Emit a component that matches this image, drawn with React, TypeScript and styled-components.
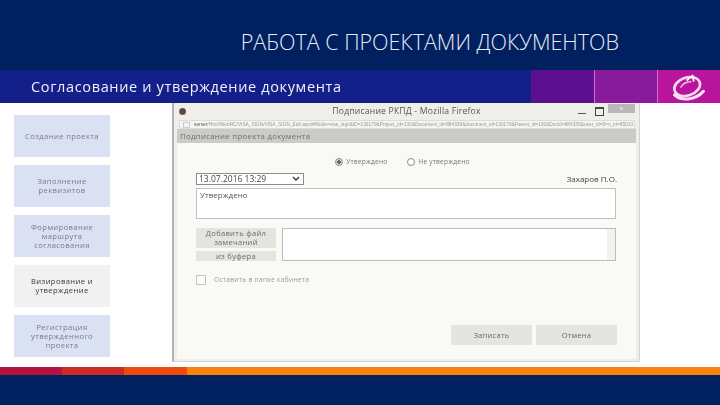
import React from "react";
import styled, { createGlobalStyle } from "styled-components";

const Global = createGlobalStyle`
  html, body { margin: 0; padding: 0; background: #002060; }
  #root { width: 720px; height: 405px; overflow: hidden; }
`;

const Slide = styled.div`
  width: 720px;
  height: 405px;
  display: flex;
  flex-direction: column;
  background: #fff;
  font-family: "Open Sans", "Noto Sans", sans-serif;
`;

const TitleBar = styled.header`
  height: 70px;
  flex: none;
  background: #002060;
  display: flex;
  align-items: flex-start;
  justify-content: flex-end;
  padding: 30px 101px 0 0;
  box-sizing: border-box;
`;

const Title = styled.h1`
  margin: 0;
  font: 300 21.5px/24px "Open Sans", sans-serif;
  color: #e8ecf6;
  white-space: nowrap;
`;

const Band = styled.div`
  height: 33px;
  flex: none;
  display: flex;
  background: #14208a;
`;

const BandTitle = styled.div`
  flex: 1;
  padding-left: 31px;
  font: 400 14.5px/34px "Open Sans", sans-serif;
  letter-spacing: 0.65px;
  color: #f0f2fa;
  filter: blur(0.3px);
`;

const BandBlock = styled.div<{ $bg: string; $line?: boolean }>`
  width: 63px;
  background: ${(p) => p.$bg};
  box-shadow: ${(p) => (p.$line ? "inset 1px 0 0 #d070c8" : "none")};
  display: flex;
  align-items: center;
  justify-content: center;
`;

const Main = styled.main`
  height: 264px;
  flex: none;
  display: flex;
  background: #fff;
`;

const Sidebar = styled.nav`
  width: 172px;
  flex: none;
  box-sizing: border-box;
  padding: 12px 0 0 14px;
  display: flex;
  flex-direction: column;
  gap: 8px;
`;

const Step = styled.div<{ $active?: boolean }>`
  width: 96px;
  height: 42px;
  flex: none;
  box-sizing: border-box;
  padding: 0 4px;
  display: flex;
  align-items: center;
  justify-content: center;
  text-align: center;
  background: ${(p) => (p.$active ? "#f1f1f1" : "#d9e1f2")};
  color: ${(p) => (p.$active ? "#3a3a3a" : "#777c8a")};
  font: 400 7.6px/9px "Open Sans", sans-serif;
  letter-spacing: 0.4px;
  filter: blur(0.45px);
`;

const Win = styled.section`
  width: 468px;
  height: 259px;
  flex: none;
  box-sizing: border-box;
  border: 1px solid #d4d4d4;
  border-left: 2px solid #b4b4b4;
  border-top: none;
  padding: 0 3px 2px 3px;
  background: #efefea;
  display: flex;
  flex-direction: column;
`;

const WinTitle = styled.div`
  position: relative;
  height: 17px;
  flex: none;
  display: flex;
  align-items: center;
  justify-content: center;
  font: 400 8.6px/17px "Open Sans", sans-serif;
  letter-spacing: 0.2px;
  color: #555;
  filter: blur(0.3px);
`;

const FoxDot = styled.span`
  position: absolute;
  left: 2px;
  top: 5px;
  width: 7px;
  height: 7px;
  border-radius: 50%;
  background: radial-gradient(circle at 55% 45%, #4a4a5a 35%, #b5483a 80%);
`;

const WinControls = styled.div`
  position: absolute;
  right: 1px;
  top: 1px;
  display: flex;
  align-items: flex-start;
  gap: 9px;
`;

const MinIcon = styled.span`
  width: 8px;
  height: 1px;
  margin-top: 9px;
  background: #555;
`;

const MaxIcon = styled.span`
  width: 7px;
  height: 6px;
  margin-top: 3px;
  border: 1px solid #444;
  border-top-width: 2px;
`;

const CloseBtn = styled.span`
  width: 27px;
  height: 9px;
  margin-left: -5px;
  background: #b8b8b8;
  color: #eee;
  text-align: center;
  font: 700 6px/8px "Liberation Sans", sans-serif;
`;

const UrlBar = styled.div`
  height: 9px;
  flex: none;
  margin: 0 1px 0 2px;
  box-sizing: border-box;
  border: 1px solid #dcdcdc;
  background: #f4f4f2;
  display: flex;
  align-items: center;
  gap: 4px;
  padding-left: 3px;
  overflow: hidden;
  white-space: nowrap;
  font: 400 4.8px/7px "Liberation Sans", sans-serif;
  color: #9a9a9a;
  filter: blur(0.3px);
  b { color: #555; font-weight: 400; }
`;

const Globe = styled.span`
  width: 5px;
  height: 4px;
  flex: none;
  border: 1px solid #c8cbd8;
`;

const Body = styled.div`
  flex: 1;
  display: flex;
  flex-direction: column;
  background: #f9f9f5;
  min-height: 0;
`;

const FormHead = styled.div`
  height: 14px;
  flex: none;
  background: #cdcbc5;
  padding-left: 3px;
  font: 400 7.8px/14px "Open Sans", sans-serif;
  letter-spacing: 0.3px;
  color: #6f6f6a;
  filter: blur(0.4px);
`;

const Form = styled.div`
  flex: 1;
  box-sizing: border-box;
  padding: 12px 19px 14px 19px;
  display: flex;
  flex-direction: column;
`;

const RadioRow = styled.div`
  display: flex;
  justify-content: center;
  gap: 20px;
  height: 13px;
  align-items: center;
  padding-right: 8px;
`;

const RadioItem = styled.label`
  display: flex;
  align-items: center;
  gap: 3px;
  font: 400 6.6px/10px "Open Sans", sans-serif;
  letter-spacing: 0.2px;
  color: #777;
  filter: blur(0.35px);
`;

const Radio = styled.span<{ $on?: boolean }>`
  width: 8px;
  height: 8px;
  box-sizing: border-box;
  border-radius: 50%;
  border: 1px solid #8a8a8a;
  background: ${(p) => (p.$on ? "radial-gradient(circle, #666 40%, #ddd 50%)" : "#fff")};
`;

const SelectRow = styled.div`
  margin-top: 4px;
  height: 13px;
  display: flex;
  justify-content: space-between;
  align-items: center;
`;

const Select = styled.div`
  width: 108px;
  height: 12px;
  box-sizing: border-box;
  border: 1px solid #8c8c8c;
  background: #fff;
  display: flex;
  align-items: center;
  justify-content: space-between;
  padding: 0 3px 0 2px;
  font: 400 8.5px/10px "Open Sans", sans-serif;
  color: #444;
  filter: blur(0.25px);
`;

const Person = styled.div`
  font: 400 8px/10px "Open Sans", sans-serif;
  color: #444;
  filter: blur(0.25px);
`;

const Note = styled.div`
  margin-top: 3px;
  width: 420px;
  height: 31px;
  box-sizing: border-box;
  border: 1px solid #c0c0c0;
  background: #fff;
  padding: 1px 3px;
  font: 400 8px/10px "Open Sans", sans-serif;
  color: #555;
  filter: blur(0.3px);
`;

const AttachRow = styled.div`
  margin-top: 9px;
  display: flex;
  gap: 6px;
`;

const AttachCol = styled.div`
  width: 80px;
  display: flex;
  flex-direction: column;
  gap: 3px;
`;

const GrayBtn = styled.div<{ $h: number }>`
  height: ${(p) => p.$h}px;
  background: #e6e4df;
  display: flex;
  align-items: center;
  justify-content: center;
  text-align: center;
  font: 400 7.6px/9px "Open Sans", sans-serif;
  letter-spacing: 0.3px;
  color: #6c6c68;
  filter: blur(0.35px);
`;

const AttachBox = styled.div`
  width: 334px;
  height: 33px;
  box-sizing: border-box;
  border: 1px solid #bcbcbc;
  background: #fff;
  display: flex;
  justify-content: flex-end;
`;

const Scroll = styled.div`
  width: 8px;
  background: #f1f1f1;
`;

const CheckRow = styled.div`
  margin-top: 14px;
  display: flex;
  align-items: center;
  gap: 8px;
  font: 400 6.6px/10px "Open Sans", sans-serif;
  letter-spacing: 0.3px;
  color: #9a9a96;
  filter: blur(0.3px);
`;

const Check = styled.span`
  width: 8px;
  height: 8px;
  border: 1px solid #c6c6c6;
  background: #fbfbfb;
`;

const Footer = styled.div`
  margin-top: auto;
  display: flex;
  justify-content: flex-end;
  gap: 4px;
`;

const FootBtn = styled.div`
  width: 81px;
  height: 20px;
  background: #e6e4df;
  display: flex;
  align-items: center;
  justify-content: center;
  font: 400 7.6px/10px "Open Sans", sans-serif;
  letter-spacing: 0.2px;
  color: #6a6a66;
  filter: blur(0.35px);
`;

const Stripes = styled.div`
  height: 8px;
  flex: none;
  display: flex;
`;

const Stripe = styled.div<{ $bg: string; $w?: number }>`
  background: ${(p) => p.$bg};
  ${(p) => (p.$w ? `width: ${p.$w}px;` : "flex: 1;")}
`;

const BottomBar = styled.footer`
  flex: 1;
  background: #002060;
`;

const Logo = () => (
  <svg width="36" height="29" viewBox="3 1 30 24" fill="none">
    <ellipse cx="16.5" cy="13" rx="11" ry="7.5" stroke="#f6d8f0" strokeWidth="2.2" transform="rotate(-18 16.5 13)" />
    <path d="M6 20c5 5 17 5 24-3" stroke="#f8e4f4" strokeWidth="2.6" strokeLinecap="round" />
    <path d="M16 8l5-4 1 5" stroke="#ffffff" strokeWidth="1.4" />
    <path d="M11 14c2-4 6-5 9-5" stroke="#e9b2de" strokeWidth="1.4" />
  </svg>
);

export default function App() {
  return (
    <Slide>
      <Global />
      <TitleBar>
        <Title>РАБОТА С ПРОЕКТАМИ ДОКУМЕНТОВ</Title>
      </TitleBar>
      <Band>
        <BandTitle>Согласование и утверждение документа</BandTitle>
        <BandBlock $bg="#5c0f8e" />
        <BandBlock $bg="#881a9c" $line />
        <BandBlock $bg="#b8149c" $line>
          <Logo />
        </BandBlock>
      </Band>
      <Main>
        <Sidebar>
          <Step>Создание проекта</Step>
          <Step>Заполнение реквизитов</Step>
          <Step>Формирование маршрута согласования</Step>
          <Step $active>Визирование и утверждение</Step>
          <Step>Регистрация утвержденного проекта</Step>
        </Sidebar>
        <Win>
          <WinTitle>
            <FoxDot />
            Подписание РКПД - Mozilla Firefox
            <WinControls>
              <MinIcon />
              <MaxIcon />
              <CloseBtn>x</CloseBtn>
            </WinControls>
          </WinTitle>
          <UrlBar>
            <Globe />
            <span>
              <b>server</b>/Html/WebRC/VISA_SIGN/VISA_SIGN_Edit.aspx#Mode=visa_sign&amp;ID=130179&amp;Project_id=130&amp;Document_id=884339&amp;document_id=130179&amp;Parent_id=130&amp;DocId=884339&amp;user_id=5=n_id=85013
            </span>
          </UrlBar>
          <Body>
            <FormHead>Подписание проекта документа</FormHead>
            <Form>
              <RadioRow>
                <RadioItem>
                  <Radio $on />
                  Утверждено
                </RadioItem>
                <RadioItem>
                  <Radio />
                  Не утверждено
                </RadioItem>
              </RadioRow>
              <SelectRow>
                <Select>
                  13.07.2016 13:29
                  <svg width="8" height="5" viewBox="0 0 8 5" fill="none">
                    <path d="M1 1l3 3 3-3" stroke="#333" strokeWidth="1.3" />
                  </svg>
                </Select>
                <Person>Захаров П.О.</Person>
              </SelectRow>
              <Note>Утверждено</Note>
              <AttachRow>
                <AttachCol>
                  <GrayBtn $h={20}>
                    Добавить файл
                    <br />
                    замечаний
                  </GrayBtn>
                  <GrayBtn $h={10}>из буфера</GrayBtn>
                </AttachCol>
                <AttachBox>
                  <Scroll />
                </AttachBox>
              </AttachRow>
              <CheckRow>
                <Check />
                Оставить в папке кабинета
              </CheckRow>
              <Footer>
                <FootBtn>Записать</FootBtn>
                <FootBtn>Отмена</FootBtn>
              </Footer>
            </Form>
          </Body>
        </Win>
      </Main>
      <Stripes>
        <Stripe $bg="#b5123f" $w={62} />
        <Stripe $bg="#cf2a26" $w={62} />
        <Stripe $bg="#ee4b0f" $w={63} />
        <Stripe $bg="#f7830f" />
      </Stripes>
      <BottomBar />
    </Slide>
  );
}
